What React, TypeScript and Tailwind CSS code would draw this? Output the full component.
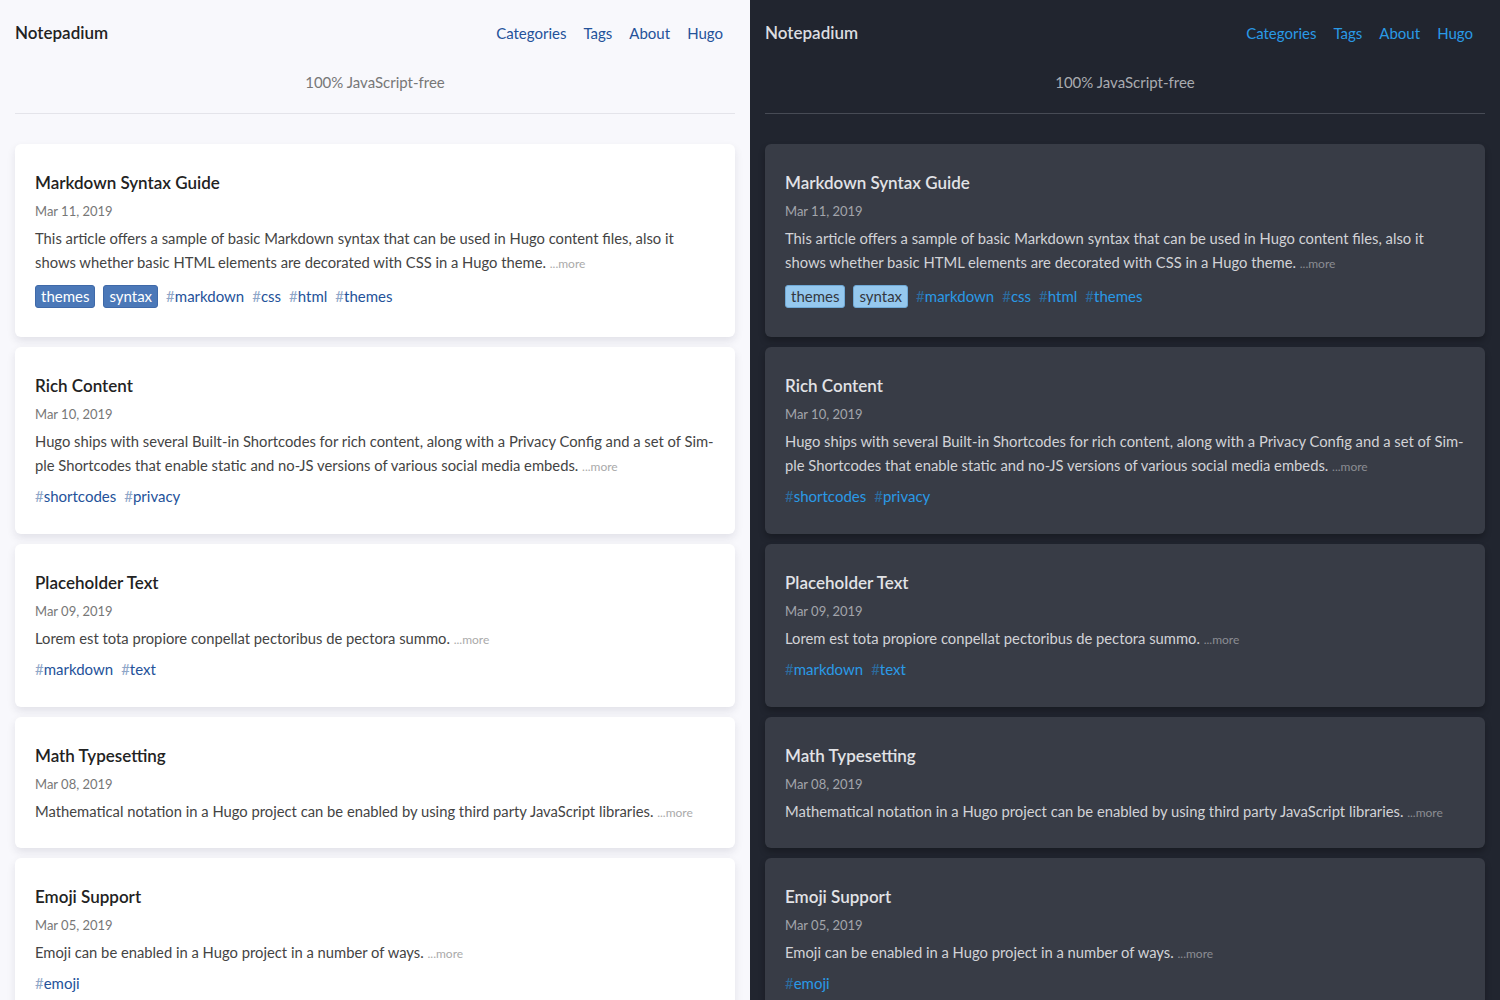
import React from "react";

type Post = {
  title: string;
  date: string;
  desc: string;
  badges?: string[];
  tags: string[];
};

const posts: Post[] = [
  {
    title: "Markdown Syntax Guide",
    date: "Mar 11, 2019",
    desc: "This article offers a sample of basic Markdown syntax that can be used in Hugo content files, also it shows whether basic HTML elements are decorated with CSS in a Hugo theme.",
    badges: ["themes", "syntax"],
    tags: ["markdown", "css", "html", "themes"],
  },
  {
    title: "Rich Content",
    date: "Mar 10, 2019",
    desc: "Hugo ships with several Built-in Shortcodes for rich content, along with a Privacy Config and a set of Sim\u00ADple Shortcodes that enable static and no-JS versions of various social media embeds.",
    tags: ["shortcodes", "privacy"],
  },
  {
    title: "Placeholder Text",
    date: "Mar 09, 2019",
    desc: "Lorem est tota propiore conpellat pectoribus de pectora summo.",
    tags: ["markdown", "text"],
  },
  {
    title: "Math Typesetting",
    date: "Mar 08, 2019",
    desc: "Mathematical notation in a Hugo project can be enabled by using third party JavaScript libraries.",
    tags: [],
  },
  {
    title: "Emoji Support",
    date: "Mar 05, 2019",
    desc: "Emoji can be enabled in a Hugo project in a number of ways.",
    tags: ["emoji"],
  },
];

function Panel({ dark }: { dark: boolean }) {
  return (
    <div
      className={
        dark
          ? "w-[750px] bg-[#21252f] px-[15px] pb-10"
          : "w-[750px] bg-[#f8f8fc] px-[15px] pb-10"
      }
    >
      <header className="pt-[20px]">
        <div className="flex items-center justify-between h-[26px]">
          <div
            className={
              dark
                ? "text-[17px] font-semibold text-[#dcdde0]"
                : "text-[17px] font-semibold text-[#222]"
            }
          >
            Notepadium
          </div>
          <nav className="flex gap-[17px] pr-[12px] text-[15px]">
            {["Categories", "Tags", "About", "Hugo"].map((n) => (
              <span
                key={n}
                className={dark ? "text-[#2a9ae6]" : "text-[#24529a]"}
              >
                {n}
              </span>
            ))}
          </nav>
        </div>
        <div
          className={
            dark
              ? "mt-[24px] text-center text-[15px] leading-[24px] text-[#a9abb0]"
              : "mt-[24px] text-center text-[15px] leading-[24px] text-[#777]"
          }
        >
          100% JavaScript-free
        </div>
        <div
          className={
            dark
              ? "mt-[19px] h-px bg-[#474b55]"
              : "mt-[19px] h-px bg-[#e4e4ea]"
          }
        />
      </header>
      <main className="mt-[30px] flex flex-col gap-[10px]">
        {posts.map((p) => {
          const hasTags = p.tags.length > 0 || !!p.badges;
          return (
            <article
              key={p.title}
              className={
                dark
                  ? hasTags
                    ? "rounded-[6px] bg-[#383c46] px-5 pt-[28px] pb-[26px] shadow-[0_4px_6px_rgba(0,0,0,0.25)]"
                    : "rounded-[6px] bg-[#383c46] px-5 pt-[28px] pb-[23px] shadow-[0_4px_6px_rgba(0,0,0,0.25)]"
                  : hasTags
                    ? "rounded-[6px] bg-white px-5 pt-[28px] pb-[26px] shadow-[0_4px_8px_rgba(30,30,60,0.10)]"
                    : "rounded-[6px] bg-white px-5 pt-[28px] pb-[23px] shadow-[0_4px_8px_rgba(30,30,60,0.10)]"
              }
            >
              <h2
                className={
                  dark
                    ? "text-[17px] leading-[22px] font-semibold text-[#e2e3e6]"
                    : "text-[17px] leading-[22px] font-semibold text-[#222]"
                }
              >
                {p.title}
              </h2>
              <div
                className={
                  dark
                    ? "mt-[7px] text-[13px] leading-[20px] text-[#a3a5ab]"
                    : "mt-[7px] text-[13px] leading-[20px] text-[#777]"
                }
              >
                {p.date}
              </div>
              <p
                className={
                  dark
                    ? "mt-[5px] text-[14.78px] leading-[24px] text-[#d2d3d7]"
                    : "mt-[5px] text-[14.78px] leading-[24px] text-[#444]"
                }
              >
                {p.desc}{" "}
                <span
                  className={
                    dark
                      ? "text-[12px] text-[#8b8d93]"
                      : "text-[12px] text-[#aaa]"
                  }
                >
                  ...more
                </span>
              </p>
              {hasTags && (
                <div
                  className={
                    p.badges
                      ? "mt-[5px] flex h-[30px] items-center gap-2 text-[15px]"
                      : "mt-[5px] flex h-[24px] items-center gap-2 text-[15px]"
                  }
                >
                  {p.badges?.map((b) => (
                    <span
                      key={b}
                      className={
                        dark
                          ? "rounded-[3px] border border-[#6fa9d6] bg-[#95c8ee] px-[5px] leading-[21px] text-[#33373f]"
                          : "rounded-[3px] border border-[#3f69a8] bg-[#4b78b8] px-[5px] leading-[21px] text-white"
                      }
                    >
                      {b}
                    </span>
                  ))}
                  {p.tags.map((t) => (
                    <span
                      key={t}
                      className={dark ? "text-[#2a9ae6]" : "text-[#24529a]"}
                    >
                      <span
                        className={dark ? "text-[#2d6c9e]" : "text-[#8ea6c8]"}
                      >
                        #
                      </span>
                      {t}
                    </span>
                  ))}
                </div>
              )}
            </article>
          );
        })}
      </main>
    </div>
  );
}

export default function App() {
  return (
    <div
      className="flex w-[1500px] min-h-[1000px]"
      style={{ fontFamily: "Lato, 'Noto Sans', sans-serif" }}
      lang="en"
    >
      <Panel dark={false} />
      <Panel dark={true} />
    </div>
  );
}
